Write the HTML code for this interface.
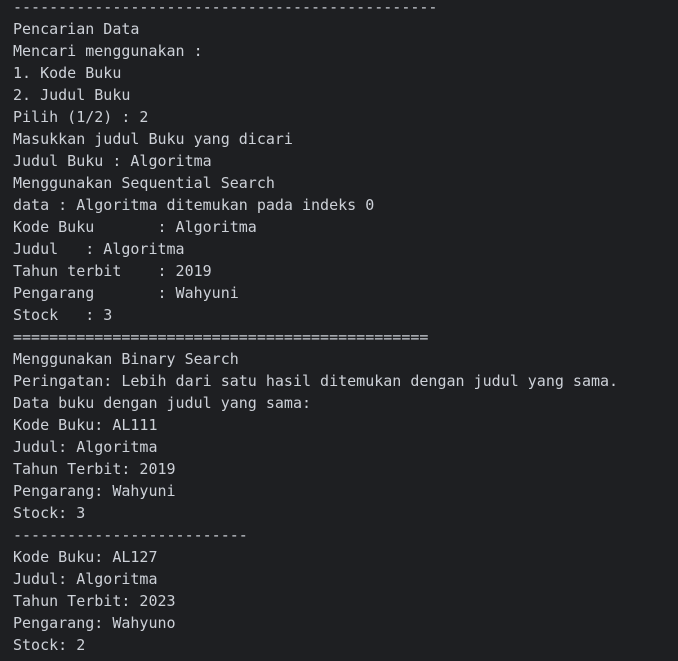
<!DOCTYPE html>
<html><head><style>
html,body{margin:0;padding:0;background:#1e1f22;width:678px;height:661px;overflow:hidden}
pre{margin:0;position:absolute;left:13px;top:-4px;font-family:"DejaVu Sans Mono","Liberation Mono",monospace;font-size:15px;line-height:22px;color:#cdd1d8;tab-size:8;-moz-tab-size:8}
</style></head><body>
<pre>-----------------------------------------------
Pencarian Data
Mencari menggunakan :
1. Kode Buku
2. Judul Buku
Pilih (1/2) : 2
Masukkan judul Buku yang dicari
Judul Buku : Algoritma
Menggunakan Sequential Search
data : Algoritma ditemukan pada indeks 0
Kode Buku	: Algoritma
Judul	: Algoritma
Tahun terbit	: 2019
Pengarang	: Wahyuni
Stock	: 3
==============================================
Menggunakan Binary Search
Peringatan: Lebih dari satu hasil ditemukan dengan judul yang sama.
Data buku dengan judul yang sama:
Kode Buku: AL111
Judul: Algoritma
Tahun Terbit: 2019
Pengarang: Wahyuni
Stock: 3
--------------------------
Kode Buku: AL127
Judul: Algoritma
Tahun Terbit: 2023
Pengarang: Wahyuno
Stock: 2</pre>
</body></html>
